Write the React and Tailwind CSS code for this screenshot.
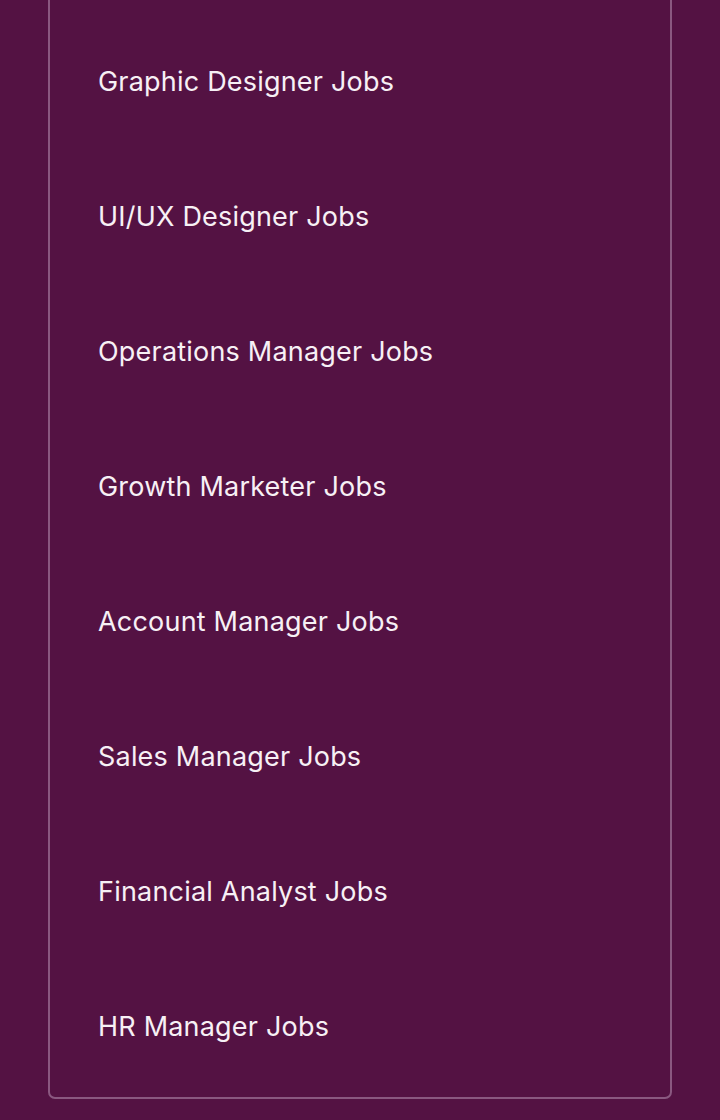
export default function App() {
  const items = [
    "Graphic Designer Jobs",
    "UI/UX Designer Jobs",
    "Operations Manager Jobs",
    "Growth Marketer Jobs",
    "Account Manager Jobs",
    "Sales Manager Jobs",
    "Financial Analyst Jobs",
    "HR Manager Jobs",
  ];
  return (
    <div
      className="w-[720px] h-[1120px] overflow-hidden bg-[#541243] px-[48px]"
      style={{ fontFamily: "Inter, 'Noto Sans', sans-serif" }}
    >
      <div className="-mt-[10px] border-2 border-[#8a5880] rounded-[7px] pt-[22px] pb-[3px] pl-[48px]">
        {items.map((t) => (
          <div key={t} className="h-[135px] flex items-center">
            <span className="text-[27px] leading-none text-[#f7f0f5] tracking-[0.2px]">{t}</span>
          </div>
        ))}
      </div>
    </div>
  );
}
